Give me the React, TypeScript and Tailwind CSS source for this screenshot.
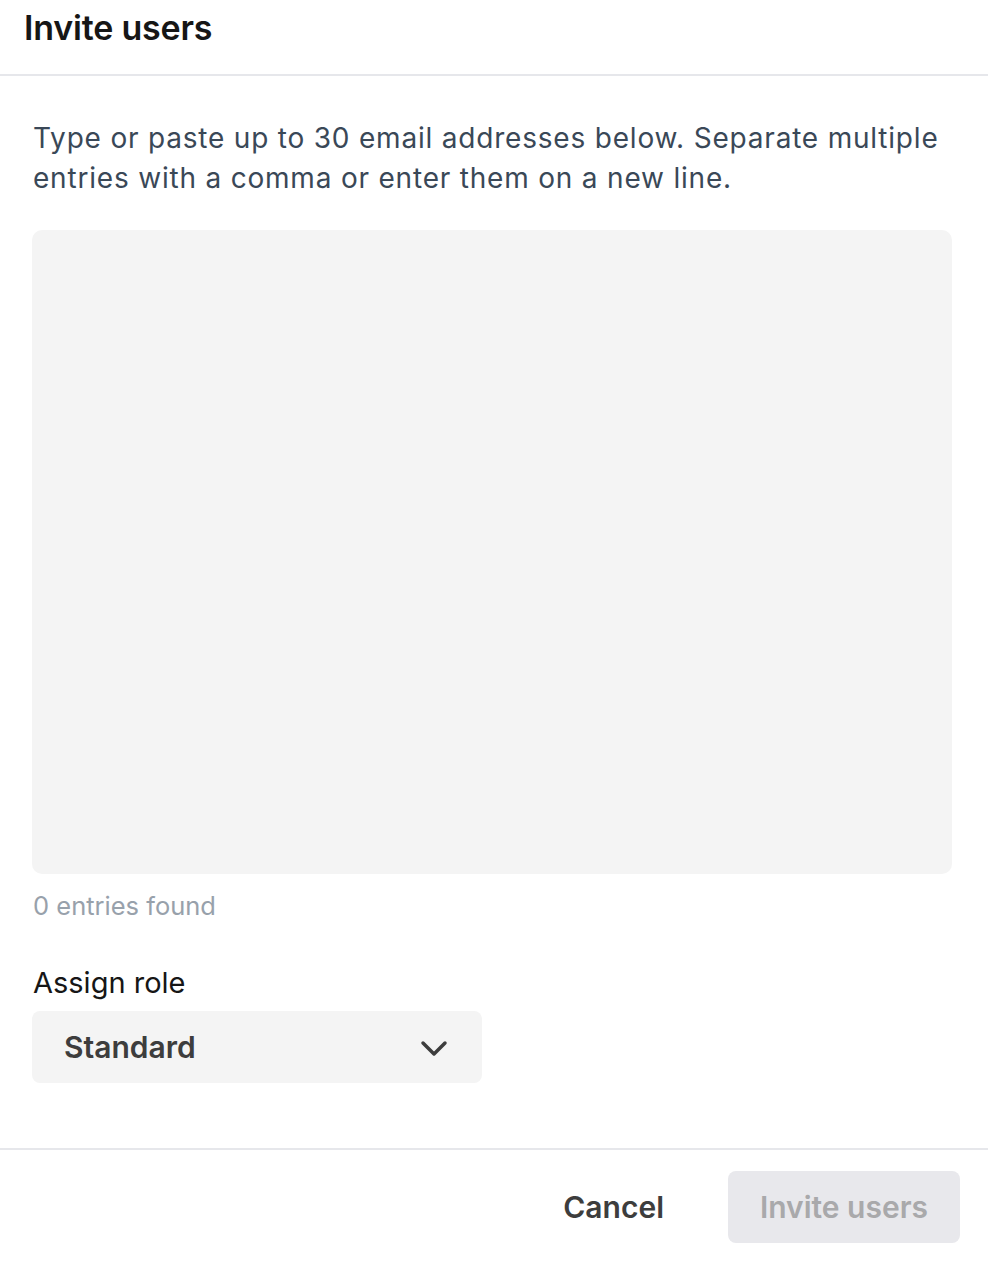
import React from "react";

export default function App() {
  return (
    <div className="w-[988px] h-[1264px] bg-white flex flex-col" style={{ fontFamily: "Inter, 'Noto Sans', sans-serif" }}>
      <div className="h-[76px] px-[24px] pt-[5px] flex items-start border-b-2 border-[#e6e7eb]">
        <h1 className="text-[34px] leading-[46px] font-semibold text-[#161616] tracking-[-0.2px]">Invite users</h1>
      </div>
      <div className="flex-1 px-[32px] pt-[42px] flex flex-col">
        <p className="w-[924px] text-[28px] leading-[40px] text-[#3a4857] tracking-[0.8px] pl-[1px]">
          Type or paste up to 30 email addresses below. Separate multiple entries with a comma or enter them on a new line.
        </p>
        <textarea className="mt-[32px] w-[920px] h-[644px] bg-[#f4f4f4] rounded-[10px] resize-none outline-none" />
        <div className="mt-[14px] text-[25.5px] leading-[36px] text-[#98a1ab] pl-[1px]">0 entries found</div>
        <div className="mt-[40px] text-[29px] leading-[38px] text-[#161616] pl-[1px]">Assign role</div>
        <div className="mt-[9px] w-[450px] h-[72px] bg-[#f4f4f4] rounded-[8px] flex items-center justify-between pl-[32px] pr-[34px]">
          <span className="text-[30px] font-semibold text-[#3d3d3d]">Standard</span>
          <svg width="28" height="18" viewBox="0 0 28 18" fill="none" className="mt-[4px]">
            <path d="M3 3 L14 14 L25 3" stroke="#3d3d3d" strokeWidth="3.5" strokeLinecap="round" strokeLinejoin="round" />
          </svg>
        </div>
      </div>
      <div className="h-[116px] border-t-2 border-[#e6e7eb] flex items-center justify-end pr-[28px] gap-[64px]">
        <button className="text-[30px] font-semibold text-[#3d3d3d]">Cancel</button>
        <button className="w-[232px] h-[72px] rounded-[8px] bg-[#e8e8ec] text-[30px] font-semibold text-[#a9a9ab]">Invite users</button>
      </div>
    </div>
  );
}
